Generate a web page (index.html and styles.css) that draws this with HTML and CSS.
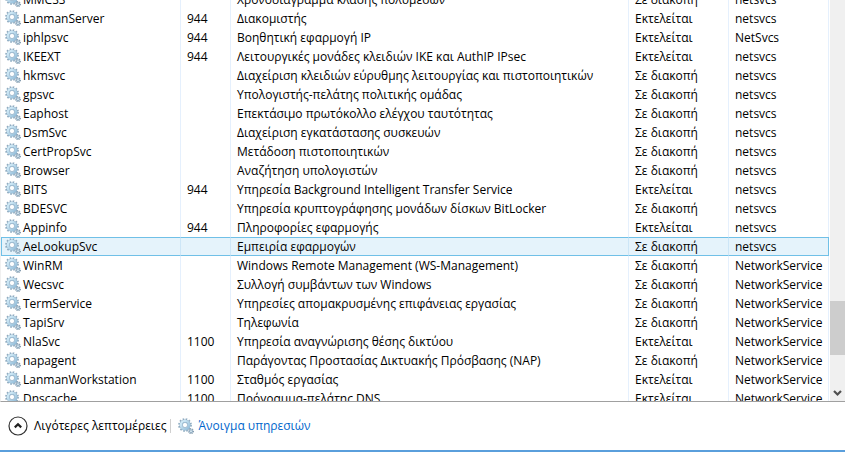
FILE: index.html
```html
<!DOCTYPE html>
<html lang="el">
<head>
  <meta charset="UTF-8">
  <title>Υπηρεσίες</title>
  <link rel="stylesheet" href="styles.css">
</head>
<body>
<svg class="defs" aria-hidden="true">
  <defs>
    <linearGradient id="steel" x1="0" y1="0" x2="1" y2="1">
      <stop offset="0" stop-color="#d8f0fb"/>
      <stop offset="1" stop-color="#93bdd9"/>
    </linearGradient>
    <symbol id="gears" viewBox="0 0 16 16">
      <circle cx="7" cy="7" r="6" fill="none" stroke="#8fabc0" stroke-width="1.8" stroke-dasharray="1.6 1.54"/>
      <circle cx="7" cy="7" r="4.1" fill="none" stroke="#94b3c9" stroke-width="3"/>
      <circle cx="7" cy="7" r="4.1" fill="none" stroke="url(#steel)" stroke-width="2.3"/>
      <circle cx="7" cy="7" r="2.6" fill="#fff" stroke="#87aac5" stroke-width=".7"/>
      <circle cx="13" cy="13.2" r="2.4" fill="none" stroke="#8199ac" stroke-width="1.2" stroke-dasharray="1 .88"/>
      <circle cx="13" cy="13.2" r="1.5" fill="#dceaf2" stroke="#8fabc0" stroke-width="1.1"/>
    </symbol>
  </defs>
</svg>

<main class="list">
  <div class="list-view">
    <table class="services">
      <colgroup>
        <col class="col-name">
        <col class="col-pid">
        <col>
        <col class="col-status">
        <col class="col-group">
      </colgroup>
      <tbody>
        <tr><td><svg class="gear"><use href="#gears"/></svg>MMCSS</td><td></td><td>Χρονοδιάγραμμα κλάσης πολυμέσων</td><td>Σε διακοπή</td><td>netsvcs</td></tr>
        <tr><td><svg class="gear"><use href="#gears"/></svg>LanmanServer</td><td>944</td><td>Διακομιστής</td><td>Εκτελείται</td><td>netsvcs</td></tr>
        <tr><td><svg class="gear"><use href="#gears"/></svg>iphlpsvc</td><td>944</td><td>Βοηθητική εφαρμογή IP</td><td>Εκτελείται</td><td>NetSvcs</td></tr>
        <tr><td><svg class="gear"><use href="#gears"/></svg>IKEEXT</td><td>944</td><td>Λειτουργικές μονάδες κλειδιών IKE και AuthIP IPsec</td><td>Εκτελείται</td><td>netsvcs</td></tr>
        <tr><td><svg class="gear"><use href="#gears"/></svg>hkmsvc</td><td></td><td>Διαχείριση κλειδιών εύρυθμης λειτουργίας και πιστοποιητικών</td><td>Σε διακοπή</td><td>netsvcs</td></tr>
        <tr><td><svg class="gear"><use href="#gears"/></svg>gpsvc</td><td></td><td>Υπολογιστής-πελάτης πολιτικής ομάδας</td><td>Σε διακοπή</td><td>netsvcs</td></tr>
        <tr><td><svg class="gear"><use href="#gears"/></svg>Eaphost</td><td></td><td>Επεκτάσιμο πρωτόκολλο ελέγχου ταυτότητας</td><td>Σε διακοπή</td><td>netsvcs</td></tr>
        <tr><td><svg class="gear"><use href="#gears"/></svg>DsmSvc</td><td></td><td>Διαχείριση εγκατάστασης συσκευών</td><td>Σε διακοπή</td><td>netsvcs</td></tr>
        <tr><td><svg class="gear"><use href="#gears"/></svg>CertPropSvc</td><td></td><td>Μετάδοση πιστοποιητικών</td><td>Σε διακοπή</td><td>netsvcs</td></tr>
        <tr><td><svg class="gear"><use href="#gears"/></svg>Browser</td><td></td><td>Αναζήτηση υπολογιστών</td><td>Σε διακοπή</td><td>netsvcs</td></tr>
        <tr><td><svg class="gear"><use href="#gears"/></svg>BITS</td><td>944</td><td>Υπηρεσία Background Intelligent Transfer Service</td><td>Εκτελείται</td><td>netsvcs</td></tr>
        <tr><td><svg class="gear"><use href="#gears"/></svg>BDESVC</td><td></td><td>Υπηρεσία κρυπτογράφησης μονάδων δίσκων BitLocker</td><td>Σε διακοπή</td><td>netsvcs</td></tr>
        <tr><td><svg class="gear"><use href="#gears"/></svg>Appinfo</td><td>944</td><td>Πληροφορίες εφαρμογής</td><td>Εκτελείται</td><td>netsvcs</td></tr>
        <tr class="selected"><td><svg class="gear"><use href="#gears"/></svg>AeLookupSvc</td><td></td><td>Εμπειρία εφαρμογών</td><td>Σε διακοπή</td><td>netsvcs</td></tr>
        <tr><td><svg class="gear"><use href="#gears"/></svg>WinRM</td><td></td><td>Windows Remote Management (WS-Management)</td><td>Σε διακοπή</td><td>NetworkService</td></tr>
        <tr><td><svg class="gear"><use href="#gears"/></svg>Wecsvc</td><td></td><td>Συλλογή συμβάντων των Windows</td><td>Σε διακοπή</td><td>NetworkService</td></tr>
        <tr><td><svg class="gear"><use href="#gears"/></svg>TermService</td><td></td><td>Υπηρεσίες απομακρυσμένης επιφάνειας εργασίας</td><td>Σε διακοπή</td><td>NetworkService</td></tr>
        <tr><td><svg class="gear"><use href="#gears"/></svg>TapiSrv</td><td></td><td>Τηλεφωνία</td><td>Σε διακοπή</td><td>NetworkService</td></tr>
        <tr><td><svg class="gear"><use href="#gears"/></svg>NlaSvc</td><td>1100</td><td>Υπηρεσία αναγνώρισης θέσης δικτύου</td><td>Εκτελείται</td><td>NetworkService</td></tr>
        <tr><td><svg class="gear"><use href="#gears"/></svg>napagent</td><td></td><td>Παράγοντας Προστασίας Δικτυακής Πρόσβασης (NAP)</td><td>Σε διακοπή</td><td>NetworkService</td></tr>
        <tr><td><svg class="gear"><use href="#gears"/></svg>LanmanWorkstation</td><td>1100</td><td>Σταθμός εργασίας</td><td>Εκτελείται</td><td>NetworkService</td></tr>
        <tr><td><svg class="gear"><use href="#gears"/></svg>Dnscache</td><td>1100</td><td>Πρόγραμμα-πελάτης DNS</td><td>Εκτελείται</td><td>NetworkService</td></tr>
      </tbody>
    </table>
  </div>
  <div class="scrollbar">
    <div class="thumb"></div>
    <button class="scroll-down" type="button" aria-label="Κύλιση προς τα κάτω">
      <svg width="9" height="8" viewBox="0 0 9 8"><path d="M1 2 4.5 5.5 8 2" fill="none" stroke="#505050" stroke-width="2.2"/></svg>
    </button>
  </div>
</main>

<footer class="footer">
  <button class="details" type="button">
    <svg width="20" height="20" viewBox="0 0 20 20"><circle cx="10" cy="10" r="9" fill="#fff" stroke="#333" stroke-width="1.2"/><path d="M6.8 11.4 10 8.2l3.2 3.2" fill="none" stroke="#222" stroke-width="2.2"/></svg>
    Λιγότερες λεπτομέρειες
  </button>
  <a class="open-services" href="#"><svg class="gear"><use href="#gears"/></svg>Άνοιγμα υπηρεσιών</a>
</footer>
</body>
</html>
```

FILE: styles.css
```css
* {
  box-sizing: border-box;
}
body {
  display: flex;
  flex-direction: column;
  height: 100vh;
  margin: 0;
  background: #fff;
  color: #000;
  font-family: "Open Sans", "Noto Sans", sans-serif;
  font-size: 12px;
  line-height: 18px;
  border-bottom: 2px solid #5a9fdc;
}
.defs {
  position: absolute;
  width: 0;
  height: 0;
}

/* services list */
.list {
  display: flex;
  flex: 1;
  min-height: 0;
  border-left: 1px solid #f0f0f0;
  border-bottom: 1px solid #a0a0a0;
}
.list-view {
  flex: 1;
  overflow: hidden;
  padding-right: 1px;
}
/* scrolled half a row down */
.services {
  width: 100%;
  margin-top: -10px;
  table-layout: fixed;
  border-collapse: separate;
  border-spacing: 0;
}
.col-name { width: 180px; }
.col-pid { width: 50px; }
.col-status,
.col-group { width: 100px; }
.services td {
  height: 19px;
  padding: 0 0 0 6px;
  border-right: 1px solid #e5f0fd;
  line-height: 17px;
  white-space: nowrap;
}
.services td:first-child {
  padding-left: 4px;
}
.gear {
  width: 16px;
  height: 16px;
  margin-right: 2px;
  vertical-align: top;
}
.selected td {
  background: #e5f3fb;
  border-top: 1px solid #70c0e7;
  border-bottom: 1px solid #70c0e7;
  border-right-color: #cde6f7;
}
.selected td:first-child {
  padding-left: 3px;
  border-left: 1px solid #70c0e7;
}
.selected td:last-child {
  border-right-color: #70c0e7;
}

.scrollbar {
  display: flex;
  flex-direction: column;
  justify-content: flex-end;
  width: 15px;
  background: #f0f0f0;
}
.thumb {
  height: 54px;
  margin-bottom: 29px;
  background: #cdcdcd;
}
.scroll-down {
  display: flex;
  align-items: center;
  justify-content: center;
  height: 17px;
  padding: 0;
  border: 0;
  background: none;
}

/* bottom bar */
.footer {
  display: flex;
  align-items: center;
  height: 48px;
  padding-left: 8px;
}
.details {
  display: flex;
  align-items: center;
  gap: 6px;
  padding: 0;
  border: 0;
  background: none;
  color: #000;
  font: inherit;
}
.open-services {
  display: flex;
  align-items: center;
  gap: 2px;
  margin-left: 4px;
  padding-left: 8px;
  background: linear-gradient(#d0d0d0, #d0d0d0) left center / 1px 14px no-repeat;
  color: #0066cc;
  text-decoration: none;
}
```
